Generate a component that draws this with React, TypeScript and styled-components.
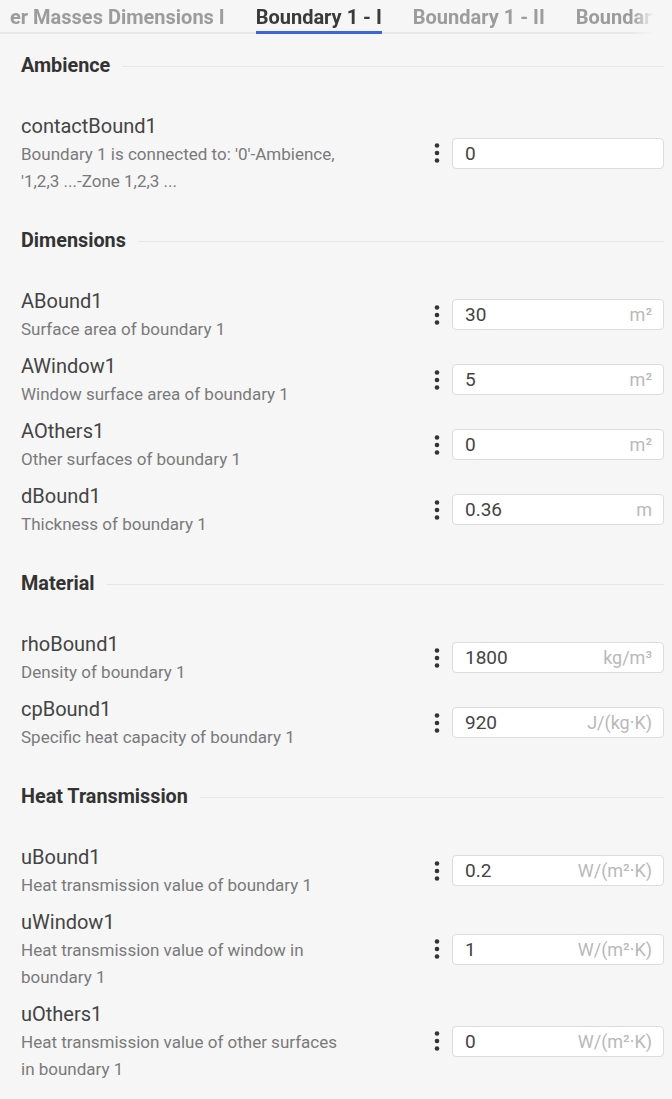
import React from 'react'
import styled, { createGlobalStyle } from 'styled-components'

const GlobalStyle = createGlobalStyle`
  body {
    margin: 0;
    background: #f6f6f6;
    font-family: Roboto, 'Noto Sans', sans-serif;
    color: #3c3c3c;
  }
`

const Page = styled.div`
  width: 672px;
  min-height: 1099px;
  background: #f6f6f6;
`

const TabBar = styled.div`
  display: flex;
  gap: 31px;
  height: 34px;
  padding-left: 10px;
  margin-right: 7px;
  overflow: hidden;
  white-space: nowrap;
  box-shadow: inset 0 -2px 0 #e8e8e8;
  -webkit-mask-image: linear-gradient(90deg, #000 632px, transparent 654px);
  mask-image: linear-gradient(90deg, #000 632px, transparent 654px);
`

const Tab = styled.div<{ $active?: boolean }>`
  flex: none;
  padding-top: 3px;
  line-height: 28px;
  font-size: 20px;
  font-weight: 700;
  color: ${p => (p.$active ? '#3a3a3a' : '#9c9c9c')};
  border-bottom: 3px solid ${p => (p.$active ? '#3d63dd' : 'transparent')};
`

const Content = styled.div`
  padding: 0 8px 20px 21px;
`

const SectionHead = styled.div<{ $first?: boolean }>`
  display: flex;
  align-items: center;
  gap: 12px;
  padding: ${p => (p.$first ? '21px' : '31px')} 0 30px;
`

const SectionTitle = styled.h3`
  margin: 0;
  font-size: 19.8px;
  line-height: 22px;
  font-weight: 700;
  color: #333;
`

const Rule = styled.div`
  flex: 1;
  height: 1px;
  background: #e6e6e6;
`

const Row = styled.div`
  display: grid;
  grid-template-columns: minmax(0, 1fr) 20px 212px;
  column-gap: 5px;
  align-items: center;
  padding: 4px 0;
`

const Info = styled.div`
  max-width: 322px;
`

const Name = styled.div`
  font-size: 20px;
  line-height: 30px;
  color: #444;
`

const Desc = styled.div`
  font-size: 17px;
  line-height: 27px;
  color: #7a7a7a;
`

const Kebab = styled.svg`
  justify-self: center;
  width: 6px;
  height: 22px;
  fill: #333;
`

const Field = styled.div`
  display: flex;
  align-items: center;
  justify-content: space-between;
  height: 31px;
  box-sizing: border-box;
  padding: 0 11px 0 12px;
  background: #fff;
  border: 1px solid #dcdcdc;
  border-radius: 4px;
`

const Value = styled.span`
  font-size: 19px;
  color: #444;
`

const Unit = styled.span`
  font-size: 18px;
  color: #b9b9b9;
`

type Param = { name: string; desc: string; value: string; unit?: string }
type Section = { title: string; params: Param[] }

const sections: Section[] = [
  {
    title: 'Ambience',
    params: [
      {
        name: 'contactBound1',
        desc: "Boundary 1 is connected to: '0'-Ambience, '1,2,3 ...-Zone 1,2,3 ...",
        value: '0',
      },
    ],
  },
  {
    title: 'Dimensions',
    params: [
      { name: 'ABound1', desc: 'Surface area of boundary 1', value: '30', unit: 'm²' },
      { name: 'AWindow1', desc: 'Window surface area of boundary 1', value: '5', unit: 'm²' },
      { name: 'AOthers1', desc: 'Other surfaces of boundary 1', value: '0', unit: 'm²' },
      { name: 'dBound1', desc: 'Thickness of boundary 1', value: '0.36', unit: 'm' },
    ],
  },
  {
    title: 'Material',
    params: [
      { name: 'rhoBound1', desc: 'Density of boundary 1', value: '1800', unit: 'kg/m³' },
      { name: 'cpBound1', desc: 'Specific heat capacity of boundary 1', value: '920', unit: 'J/(kg·K)' },
    ],
  },
  {
    title: 'Heat Transmission',
    params: [
      { name: 'uBound1', desc: 'Heat transmission value of boundary 1', value: '0.2', unit: 'W/(m²·K)' },
      { name: 'uWindow1', desc: 'Heat transmission value of window in boundary 1', value: '1', unit: 'W/(m²·K)' },
      { name: 'uOthers1', desc: 'Heat transmission value of other surfaces in boundary 1', value: '0', unit: 'W/(m²·K)' },
    ],
  },
]

const tabs = ['er Masses Dimensions I', 'Boundary 1 - I', 'Boundary 1 - II', 'Boundary 1 - III']

const MoreIcon = () => (
  <Kebab viewBox="0 0 6 22">
    <circle cx="3" cy="3.5" r="2.3" />
    <circle cx="3" cy="11" r="2.3" />
    <circle cx="3" cy="18.5" r="2.3" />
  </Kebab>
)

export default function App() {
  return (
    <Page>
      <GlobalStyle />
      <TabBar>
        {tabs.map(t => (
          <Tab key={t} $active={t === 'Boundary 1 - I'}>{t}</Tab>
        ))}
      </TabBar>
      <Content>
        {sections.map((s, i) => (
          <div key={s.title}>
            <SectionHead $first={i === 0}>
              <SectionTitle>{s.title}</SectionTitle>
              <Rule />
            </SectionHead>
            {s.params.map(p => (
              <Row key={p.name}>
                <Info>
                  <Name>{p.name}</Name>
                  <Desc>{p.desc}</Desc>
                </Info>
                <MoreIcon />
                <Field>
                  <Value>{p.value}</Value>
                  {p.unit && <Unit>{p.unit}</Unit>}
                </Field>
              </Row>
            ))}
          </div>
        ))}
      </Content>
    </Page>
  )
}
